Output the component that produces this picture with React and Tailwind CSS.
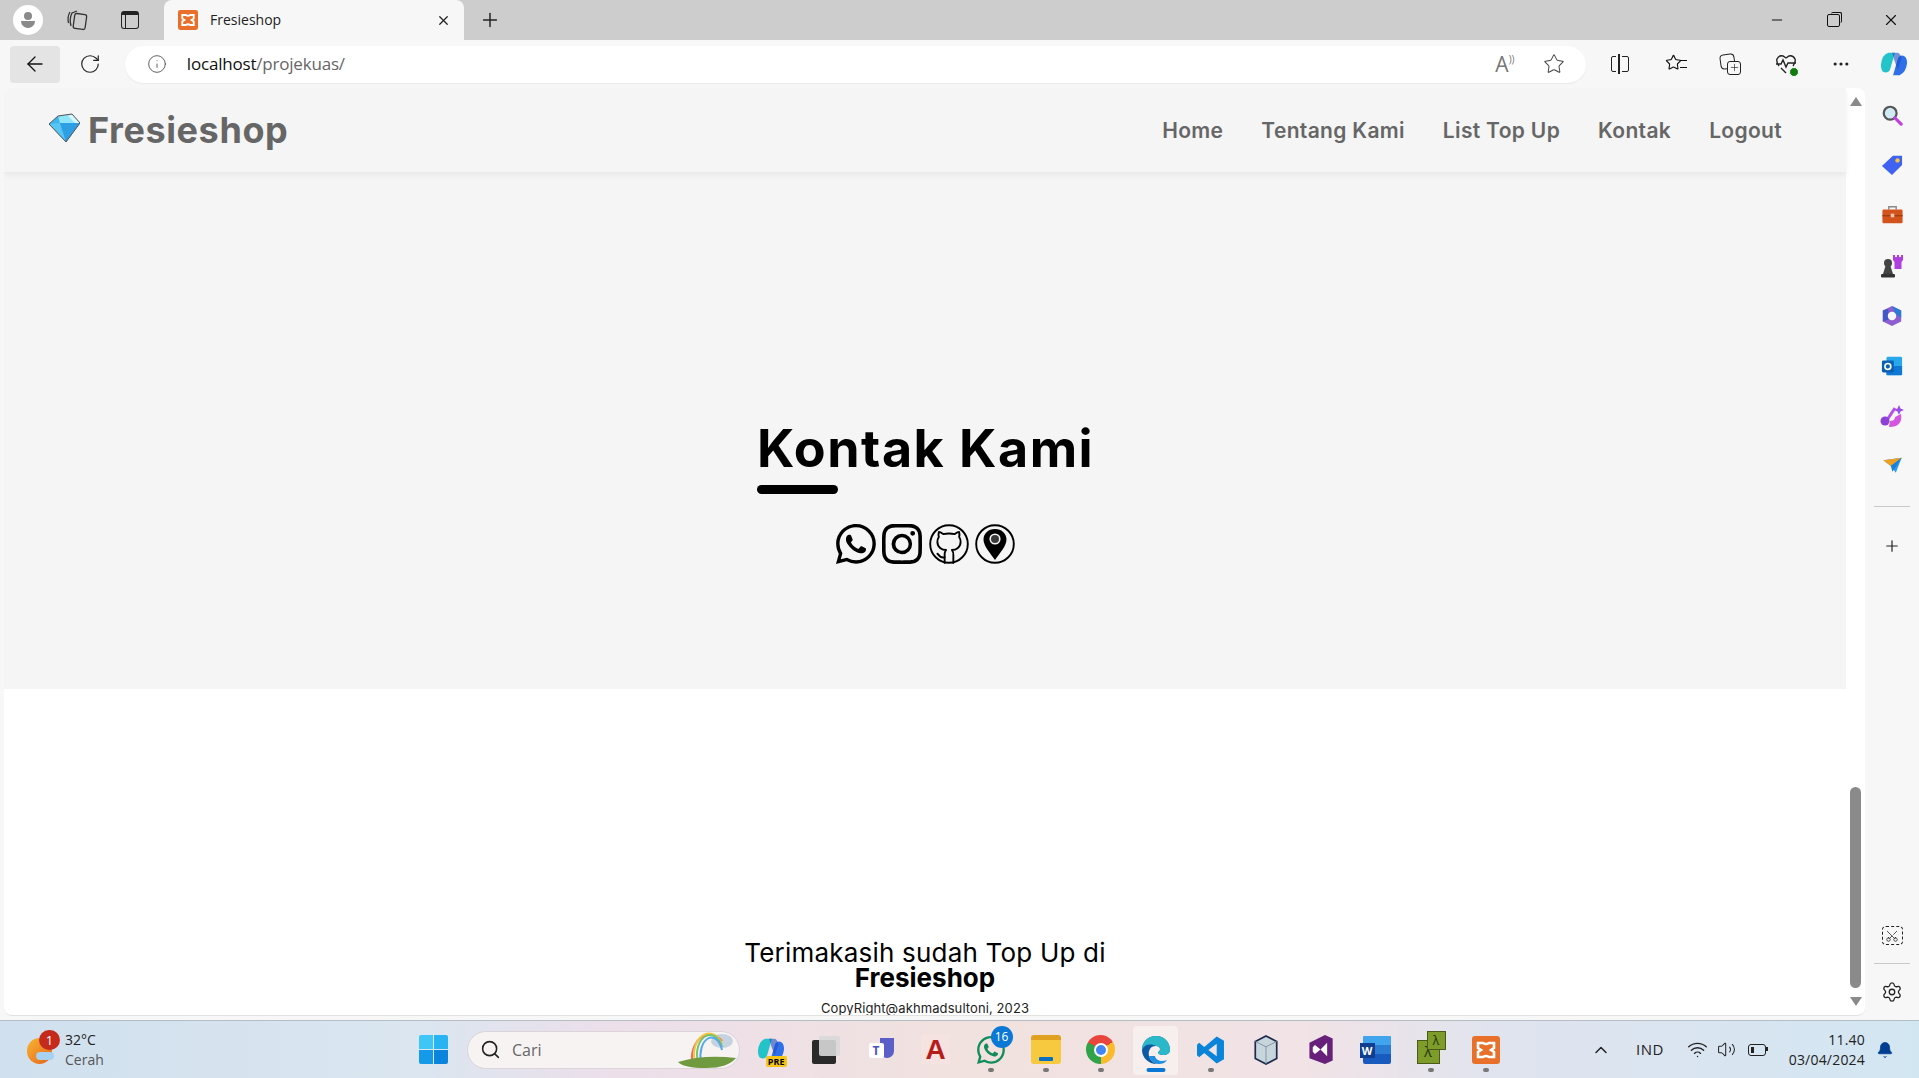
import React from 'react'
import {
  ArrowLeft, RotateCw, Info, Star, X, Plus, Minus, Ellipsis, Search, Settings, Wifi, Volume2, ChevronUp, Bell, Scissors,
} from 'lucide-react'
import { BsWhatsapp, BsInstagram } from 'react-icons/bs'

const navLinks = ['Home', 'Tentang Kami', 'List Top Up', 'Kontak', 'Logout']

const Gem = ({ className }) => (
  <svg viewBox="0 0 32 30" className={className}>
    <path d="M1 11 L10 3 L24 1 L32 10 L18 29 Z" fill="#3fb4f0" />
    <path d="M1 11 L12 10 L18 29 Z" fill="#58c6f5" />
    <path d="M12 10 L32 10 L18 29 Z" fill="#2f9fe3" />
    <path d="M10 3 L24 1 L27 10 L12 10 Z" fill="#8fe6fb" />
    <path d="M20 3 L24 1 L32 10 L27 10 Z" fill="#d7f6fd" />
    <path d="M1 11 L10 3 L24 1 L32 10 L18 29 Z" fill="none" stroke="#555" strokeWidth="1" />
  </svg>
)

const Xampp = ({ className }) => (
  <svg viewBox="0 0 28 28" className={className}>
    <rect width="28" height="28" rx="3" fill="#e8702a" />
    <path d="M6 7 H11 Q14 9 17 7 H22 V12 L19 14 L22 16 V21 H17 Q14 19 11 21 H6 V16 L9 14 L6 12 Z" fill="none" stroke="#fff" strokeWidth="2.6" />
  </svg>
)

const Copilot = ({ className }) => (
  <svg viewBox="0 0 30 30" className={className}>
    <path d="M9 3 H16 L11 20 Q10 24 6 24 Q1 24 1 16 Q2 5 9 3 Z" fill="#22c3c9" />
    <path d="M14 27 H21 Q28 24 29 14 Q29 7 24 6 Q20 6 19 10 L14 27 Z" fill="#2f6fe8" />
    <path d="M13 3 H18 Q22 3 23 9 L19 21 L15 10 Q14 6 13 3 Z" fill="#1b4fc4" opacity=".6" />
  </svg>
)

// sidebar apps, drawn small
const SideIcons = {
  search: (
    <svg viewBox="0 0 24 24" className="w-[22px] h-[22px]">
      <circle cx="10" cy="10" r="7" fill="#cfeaf5" stroke="#555" strokeWidth="2.4" />
      <path d="M15 15 L22 22" stroke="#c03ee0" strokeWidth="3.4" strokeLinecap="round" />
    </svg>
  ),
  tag: (
    <svg viewBox="0 0 24 24" className="w-[22px] h-[22px]">
      <path d="M1 13 L13 2 H23 V12 L12 23 Z" fill="#3f63f0" />
      <circle cx="18" cy="7" r="2.4" fill="#f5c542" />
    </svg>
  ),
  box: (
    <svg viewBox="0 0 24 24" className="w-[23px] h-[22px]">
      <path d="M8 6 V3 H16 V6" fill="none" stroke="#888" strokeWidth="1.6" />
      <rect x="1" y="6" width="22" height="15" rx="1.5" fill="#d2531c" />
      <rect x="1" y="12" width="22" height="1.5" fill="#a63c10" />
      <rect x="10" y="10.5" width="4" height="4" fill="#f3c3a5" />
    </svg>
  ),
  chess: (
    <svg viewBox="0 0 24 24" className="w-[24px] h-[24px]">
      <path d="M13 1 H15 V3 H17 V1 H19 V3 H21 V1 H23 V6 L21.5 8 V15 H14.5 V8 L13 6 Z" fill="#b13fe0" />
      <circle cx="8" cy="9" r="4" fill="#444" />
      <path d="M5.500 12 H10.500 L13 20 H3 Z" fill="#444" />
      <rect x="1" y="20" width="14" height="3.500" rx="1" fill="#333" />
    </svg>
  ),
  m365: (
    <svg viewBox="0 0 24 24" className="w-[22px] h-[22px]">
      <path d="M12 1 L22 6 V18 L12 23 L2 18 V6 Z" fill="#8f5fd0" />
      <path d="M12 1 L22 6 V14 L16 10 Z" fill="#2b7cd3" />
      <path d="M2 6 L8 4 V16 L2 18 Z" fill="#4258c8" />
      <circle cx="12" cy="12" r="4.600" fill="#f7f7f7" />
    </svg>
  ),
  outlook: (
    <svg viewBox="0 0 24 24" className="w-[22px] h-[22px]">
      <rect x="6" y="2" width="17" height="20" rx="1.5" fill="#28a8ea" />
      <path d="M6 12 L23 12 V22 H6 Z" fill="#0f78d4" />
      <rect x="1" y="6" width="13" height="13" rx="1.5" fill="#0a5fb0" />
      <circle cx="7.500" cy="12.500" r="3.200" fill="none" stroke="#fff" strokeWidth="1.8" />
    </svg>
  ),
  brush: (
    <svg viewBox="0 0 24 24" className="w-[24px] h-[24px]">
      <path d="M15 4 L7 16" stroke="#b84fe8" strokeWidth="3" />
      <path d="M9 23 Q23 23 21 10 L15 13 Q15 17 10 17 Z" fill="#d455e0" />
      <circle cx="5" cy="17" r="4.500" fill="#8d3fd6" />
      <path d="M19 1 L20.500 4.500 L24 6 L20.500 7.500 L19 11 L17.500 7.500 L14 6 L17.500 4.500 Z" fill="#9a4de8" />
    </svg>
  ),
  send: (
    <svg viewBox="0 0 24 24" className="w-[23px] h-[20px]">
      <path d="M1 5 L23 2 L16 20 L10 12 Z" fill="#2b9af0" />
      <path d="M1 5 L23 2 L10 12 Z" fill="#f0a020" />
      <path d="M10 12 L23 2 L12 19 Z" fill="#1b7fd8" />
    </svg>
  ),
}

const ChromeBtn = ({ children, className = '' }) => (
  <div className={`flex items-center justify-center ${className}`}>{children}</div>
)

const GithubCircle = () => (
  <svg viewBox="0 0 40 40" className="w-10 h-10" fill="none" stroke="#000" strokeLinecap="round" strokeLinejoin="round">
    <circle cx="20" cy="20" r="18.800" strokeWidth="1.900" />
    <g transform="translate(2.600 5) scale(1.450)" strokeWidth="1.300">
      <path d="M15 23.400V18a4.800 4.800 0 0 0-1-3.500c3 0 6-2 6-5.500.08-1.250-.27-2.480-1-3.500.28-1.150.28-2.350 0-3.500 0 0-1 0-3 1.500-2.640-.5-5.360-.5-8 0C6 2 5 2 5 2c-.3 1.150-.3 2.350 0 3.500A5.403 5.403 0 0 0 4 9c0 3.500 3 5.500 6 5.500-.39.49-.68 1.050-.85 1.650-.17.6-.22 1.230-.15 1.850v5.400" />
      <path d="M9 19.500c-2 .6-3.500-.4-5-2.500" />
    </g>
  </svg>
)

const PinCircle = () => (
  <svg viewBox="0 0 40 40" className="w-10 h-10">
    <circle cx="20" cy="20" r="18.800" fill="none" stroke="#000" strokeWidth="1.900" />
    <path d="M20 5 C13 5 8.500 10 8.500 15.500 C8.500 22 15.500 29.500 20 36 C24.500 29.500 31.500 22 31.500 15.500 C31.500 10 27 5 20 5 Z" fill="#000" />
    <circle cx="20" cy="15" r="4.800" fill="#3a3a3a" stroke="#f5f5f5" strokeWidth="1.600" />
  </svg>
)

const TabStrip = () => (
  <div className="h-10 bg-[#cdcdcd] flex items-stretch shrink-0">
    <div className="w-[56px] flex items-center justify-end pr-[13px]">
      <div className="w-[30px] h-[30px] rounded-full bg-white flex flex-col items-center justify-center">
        <div className="w-2 h-2 rounded-full bg-[#8a8a8a]" />
        <div className="w-[14px] h-[7px] rounded-b-full rounded-t-sm bg-[#8a8a8a] mt-px" />
      </div>
    </div>
    <ChromeBtn className="w-[42px]">
      <svg viewBox="0 0 22 22" className="w-[22px] h-[22px]" fill="none" stroke="#333" strokeWidth="1.3">
        <rect x="8" y="5" width="12" height="15" rx="2" transform="rotate(8 14 12)" />
        <path d="M5 17 Q3 10 6 4 L11 2" />
        <path d="M2.500 14 Q1 8 4 3" />
      </svg>
    </ChromeBtn>
    <ChromeBtn className="w-[64px]">
      <div className="w-[18px] h-[18px] rounded-[3px] border-[1.5px] border-[#222] border-t-[4px] flex">
        <div className="w-[4px] border-r border-[#222]" />
      </div>
    </ChromeBtn>
    <div className="w-[300px] ml-[2px] bg-[#f7f7f7] rounded-t-lg flex items-center pl-[14px] pr-[13px]">
      <Xampp className="w-5 h-5" />
      <span className="ml-[12px] -mt-[2px] flex-1 text-[14px] text-[#222] font-['Open_Sans',sans-serif]">Fresieshop</span>
      <X size={15} strokeWidth={2} className="text-[#222]" />
    </div>
    <ChromeBtn className="w-[52px]">
      <Plus size={22} strokeWidth={1.6} className="text-[#222]" />
    </ChromeBtn>
    <div className="flex-1" />
    <ChromeBtn className="w-[57px]"><Minus size={16} strokeWidth={1.6} className="text-[#111]" /></ChromeBtn>
    <ChromeBtn className="w-[57px]">
      <div className="relative w-[13px] h-[13px] rounded-[2px] border border-[#111]">
        <div className="absolute -top-[3px] -right-[3px] w-[11px] h-[11px] rounded-[2px] border-t border-r border-[#111]" />
      </div>
    </ChromeBtn>
    <ChromeBtn className="w-[57px]"><X size={18} strokeWidth={1.5} className="text-[#111]" /></ChromeBtn>
  </div>
)

const Toolbar = () => (
  <div className="h-12 bg-[#f7f7f7] flex items-center shrink-0 pl-[10px]">
    <div className="w-[50px] h-[37px] rounded-[4px] bg-[#e4e4e4] flex items-center justify-center">
      <ArrowLeft size={24} strokeWidth={1.3} className="text-[#111]" />
    </div>
    <ChromeBtn className="w-[60px]"><RotateCw size={22} strokeWidth={1.3} className="text-[#222]" /></ChromeBtn>
    <div className="w-[1463px] h-[37px] ml-[5px] rounded-full bg-white flex items-center pl-[22px] pr-[21px] shadow-[0_1px_2px_rgba(0,0,0,0.06)]">
      <Info size={20} strokeWidth={1} className="text-[#444]" />
      <span className="ml-[20px] flex-1 text-[17px] tracking-[-0.2px] text-[#111] font-['Open_Sans',sans-serif]">
        localhost<span className="text-[#666]">/projekuas/</span>
      </span>
      <span className="text-[21px] leading-none text-[#777] mr-[28px] font-['Open_Sans',sans-serif]">A<span className="text-[10px] align-top">))</span></span>
      <Star size={22} strokeWidth={1.1} className="text-[#444]" />
    </div>
    <ChromeBtn className="w-[56px] ml-[7px]">
      <div className="relative w-[18px] h-[16px] rounded-[2px] border-[1.5px] border-[#222]">
        <div className="absolute -top-[3px] bottom-[-3px] left-[6px] w-[1.5px] bg-[#222] outline-2 outline-[#f7f7f7]" />
      </div>
    </ChromeBtn>
    <ChromeBtn className="w-[55px]">
      <div className="relative w-[22px] h-[20px]">
        <Star size={17} strokeWidth={1.6} className="text-[#111]" />
        <div className="absolute right-0 top-[6px] w-[7px] h-[8px] border-y border-[#111]" />
      </div>
    </ChromeBtn>
    <ChromeBtn className="w-[55px]">
      <div className="relative w-[21px] h-[21px]">
        <div className="absolute left-0 top-0 w-[15px] h-[15px] rounded-[4px] border-[1.3px] border-[#222] rotate-[-8deg]" />
        <div className="absolute right-0 bottom-0 w-[14px] h-[14px] rounded-[3px] border-[1.3px] border-[#222] bg-[#f7f7f7] flex items-center justify-center">
          <Plus size={11} strokeWidth={1.4} className="text-[#222]" />
        </div>
      </div>
    </ChromeBtn>
    <ChromeBtn className="w-[55px]">
      <div className="relative">
        <svg viewBox="0 0 22 22" className="w-[22px] h-[22px]" fill="none" stroke="#222" strokeWidth="1.4">
          <path d="M4 13 Q1 9 2 6 Q4 2 8 3 L11 5 L14 3 Q18 2 20 6 Q21 9 18 13 M1 11 H6 L8 7 L11 14 L13 10 H21 M6 15 L11 20" />
        </svg>
        <div className="absolute -right-[2px] -bottom-[2px] w-[10px] h-[10px] rounded-full bg-[#107c10] border border-white" />
      </div>
    </ChromeBtn>
    <ChromeBtn className="w-[55px]"><Ellipsis size={20} strokeWidth={1.8} className="text-[#222]" /></ChromeBtn>
    <ChromeBtn className="w-[51px]"><Copilot className="w-[30px] h-[28px]" /></ChromeBtn>
  </div>
)

const Page = () => (
  <div className="ml-1 w-[1861px] rounded-t-lg rounded-b-lg bg-white flex overflow-hidden border-b border-[#e2e2e2] font-['Inter',sans-serif]">
    <div className="w-[1842px] flex flex-col">
      <nav className="h-[84px] bg-[#f5f5f5] flex items-center pl-[44px] pr-[64px] shadow-[0_3px_6px_rgba(0,0,0,0.06)] relative z-10 shrink-0">
        <Gem className="w-[32px] h-[30px] mb-1" />
        <span className="ml-[8px] text-[36px] font-bold text-[#666] leading-none tracking-[0.600px]">Fresieshop</span>
        <div className="flex-1" />
        <div className="flex gap-[38px]">
          {navLinks.map((link) => (
            <a key={link} className="text-[21px] font-semibold text-[#666] leading-none tracking-[0.330px]">{link}</a>
          ))}
        </div>
      </nav>

      <section className="h-[517px] bg-[#f5f5f5] flex flex-col items-center pt-[251px] shrink-0">
        <div className="w-[336px]">
          <h2 className="text-[52px] leading-none font-bold text-black whitespace-nowrap tracking-[1.500px]">Kontak Kami</h2>
          <div className="w-[81px] h-[9px] rounded-full bg-black mt-[10px]" />
        </div>
        <div className="flex gap-[6.500px] mt-[30px] ml-[1px]">
          <BsWhatsapp className="w-10 h-10 text-black" />
          <BsInstagram className="w-10 h-10 text-black" />
          <GithubCircle />
          <PinCircle />
        </div>
      </section>

      <footer className="flex-1 flex flex-col items-center justify-end text-black">
        <p className="text-[26px] leading-[25px] tracking-[0.200px]">Terimakasih sudah Top Up di</p>
        <p className="text-[26px] leading-[25px] font-bold">Fresieshop</p>
        <p className="text-[13px] leading-[14px] mt-[11px] text-[#222] tracking-[0.100px]">CopyRight@akhmadsultoni, 2023</p>
      </footer>
    </div>

    <div className="w-[19px] flex flex-col items-center pt-[9px] pb-[9px]">
      <div className="w-0 h-0 border-x-[6px] border-x-transparent border-b-[9px] border-b-[#8a8a8a]" />
      <div className="flex-1" />
      <div className="w-[11px] h-[201px] rounded-full bg-[#8a8a8a]" />
      <div className="w-0 h-0 mt-[9px] border-x-[6px] border-x-transparent border-t-[9px] border-t-[#8a8a8a]" />
    </div>
  </div>
)

const SidePanel = () => (
  <div className="flex-1 flex flex-col items-center pt-[27px] pb-[13px]">
    <div className="flex flex-col gap-[50.200px] items-center">
      {Object.entries(SideIcons).map(([name, icon]) => (
        <div key={name} className="h-0 flex items-center justify-center">{icon}</div>
      ))}
    </div>
    <div className="w-[36px] h-px bg-[#c8c8c8] mt-[40px]" />
    <Plus size={18} strokeWidth={1.6} className="text-[#222] mt-[30px]" />
    <div className="flex-1" />
    <div className="w-[21px] h-[19px] rounded-[4px] border border-dashed border-[#222] flex items-center justify-center">
      <Scissors size={14} strokeWidth={1.3} className="text-[#222] rotate-[-90deg]" />
    </div>
    <div className="w-[36px] h-px bg-[#c8c8c8] mt-[18px]" />
    <Settings size={22} strokeWidth={1.4} className="text-[#222] mt-[17px]" />
  </div>
)

const WinLogo = () => (
  <div className="grid grid-cols-2 gap-[1px] w-[29px] h-[29px]">
    <div className="bg-[#3ec6f7] rounded-tl-[2px]" />
    <div className="bg-[#28b4f2] rounded-tr-[2px]" />
    <div className="bg-[#149ae8] rounded-bl-[2px]" />
    <div className="bg-[#0a84dc] rounded-br-[2px]" />
  </div>
)

const dot = <div className="absolute -bottom-[7px] left-1/2 -translate-x-1/2 w-[6px] h-[4px] rounded-full bg-[#777]" />

const TaskIcon = ({ children, running }) => (
  <div className="relative w-[55px] h-full flex items-center justify-center">
    <div className="relative w-[30px] h-[30px] flex items-center justify-center">
      {children}
      {running && dot}
    </div>
  </div>
)

const Taskbar = () => (
  <div className="h-[58px] shrink-0 border-t border-[#b4bcc4] flex items-stretch font-['Open_Sans',sans-serif] bg-[linear-gradient(90deg,#d0e0ee_0%,#dbe6f0_22%,#ecdfea_32%,#f1e2df_50%,#f1e3e6_68%,#e0e4ef_78%,#d2e6f2_100%)]">
    <div className="w-[410px] flex items-center pl-[27px]">
      <div className="relative w-[28px] h-[28px]">
        <div className="absolute left-0 top-[2px] w-[25px] h-[26px] rounded-full bg-[linear-gradient(135deg,#f7b733,#e8621a)]" />
        <div className="absolute left-[9px] top-[16px] w-[18px] h-[8px] rounded-full bg-[#a8d0f0]" />
        <div className="absolute left-[12px] -top-[6px] w-[21px] h-[20px] rounded-full bg-[#c42b1c] text-white text-[13px] leading-[20px] text-center">1</div>
      </div>
      <div className="ml-[10px] text-[14px] leading-[20px]">
        <div className="text-[#222]">32°C</div>
        <div className="text-[#555]">Cerah</div>
      </div>
    </div>

    <div className="w-[47px] flex items-center justify-center"><WinLogo /></div>
    <div className="ml-[10px] my-auto w-[273px] h-[38px] rounded-full bg-[#f8f3f3] border border-[#dcd4d8] flex items-center pl-[12px] pr-[3px]">
      <Search size={21} strokeWidth={1.8} className="text-[#222]" />
      <span className="ml-[11px] flex-1 text-[16px] text-[#666]">Cari</span>
      <svg viewBox="0 0 60 36" className="w-[60px] h-[36px]">
        <ellipse cx="46" cy="9" rx="11" ry="7" fill="#c5d2df" />
        <path d="M16 30 A18 24 0 0 1 46 9" fill="none" stroke="#e8705a" strokeWidth="2" />
        <path d="M19 30 A15 21 0 0 1 46 12" fill="none" stroke="#f3c542" strokeWidth="2" />
        <path d="M22 30 A12 18 0 0 1 46 15" fill="none" stroke="#6fc66f" strokeWidth="2" />
        <path d="M25 30 A9 15 0 0 1 46 18" fill="none" stroke="#58a8e8" strokeWidth="2" />
        <path d="M2 30 Q28 22 60 26 Q52 36 30 36 Q8 36 2 30 Z" fill="#6f9a3f" />
      </svg>
    </div>

    <div className="ml-[3px] flex items-stretch">
      <TaskIcon>
        <Copilot className="w-[28px] h-[28px]" />
        <span className="absolute -right-[1px] -bottom-[2px] px-[2px] rounded-[2px] bg-[#f5c518] text-[9px] leading-[11px] font-bold text-black">PRE</span>
      </TaskIcon>
      <TaskIcon>
        <div className="absolute left-[1px] bottom-[1px] w-[24px] h-[24px] rounded-[2px] bg-[#2a2a2a]" />
        <div className="absolute right-[1px] top-[1px] w-[21px] h-[20px] rounded-[2px] bg-[#d8d8d8]/90" />
      </TaskIcon>
      <TaskIcon>
        <div className="absolute right-[2px] top-[3px] w-[14px] h-[20px] rounded-b-full bg-[#5b5fc7]" />
        <div className="absolute left-[3px] top-[8px] w-[15px] h-[15px] rounded-[2px] bg-white text-[#4b53bc] text-[12px] leading-[15px] font-bold text-center">T</div>
      </TaskIcon>
      <TaskIcon>
        <div className="w-[29px] h-[29px] bg-[#f4e3e0] flex items-center justify-center text-[28px] leading-none font-bold text-[#b71c1c] font-['Liberation_Sans',sans-serif]">A</div>
      </TaskIcon>
      <TaskIcon running>
        <BsWhatsapp className="w-[28px] h-[28px] text-[#128c5a]" />
        <div className="absolute -right-[7px] -top-[9px] w-[22px] h-[22px] rounded-full bg-[#0a78d4] text-white text-[12px] leading-[22px] text-center">16</div>
      </TaskIcon>
      <TaskIcon running>
        <div className="w-[30px] h-[29px] rounded-[3px] bg-[#f7c93e] border-t-[5px] border-[#e0a020] flex items-end justify-center pb-[3px]">
          <div className="w-[14px] h-[4px] rounded-[1px] bg-[#0a6fc2]" />
        </div>
      </TaskIcon>
      <TaskIcon running>
        <div className="w-[29px] h-[29px] rounded-full bg-[conic-gradient(from_300deg,#e8453c_0_33%,#f9bb2d_33%_66%,#2fa24a_66%_100%)] flex items-center justify-center">
          <div className="w-[14px] h-[14px] rounded-full bg-[#4285f4] border-2 border-white" />
        </div>
      </TaskIcon>
      <div className="relative w-[55px] h-full flex items-center justify-center">
        <div className="absolute inset-x-[5px] top-[5px] bottom-[3px] rounded-[4px] bg-[#f7efee]" />
        <svg viewBox="0 0 30 30" className="relative w-[30px] h-[30px]">
          <path d="M15 1 C23 1 29 7 29 15 C29 18 26 20 22 20 C19 20 17 19 17 17 C20 16 20 11 15 11 C9 11 7 16 8 21 C9 25 13 29 18 29 C8 30 1 23 1 15 C1 7 7 1 15 1 Z" fill="#0c59a4" />
          <path d="M1 15 C1 7 7 1 15 1 C23 1 29 7 29 15 C29 18 26 20 22 20 C19 20 17 19 17 17 C20 16 20 11 15 11 C8 8 3 10 1 15 Z" fill="#2bb8c8" />
          <path d="M8 21 C9 25 13 29 18 29 C21 29 24 28 26 25 C21 27 15 26 14 21 Z" fill="#1f8fe0" />
        </svg>
        <div className="absolute bottom-[6px] left-1/2 -translate-x-1/2 w-[19px] h-[4px] rounded-full bg-[#0a78d4]" />
      </div>
      <TaskIcon running>
        <svg viewBox="0 0 28 28" className="w-[29px] h-[30px]">
          <path d="M20 1 L27 5 V23 L20 27 L8 17 L3 21 L1 19 V9 L3 7 L8 11 Z M20 8 L12 14 L20 20 Z" fill="#0a84d8" fillRule="evenodd" />
        </svg>
      </TaskIcon>
      <TaskIcon>
        <svg viewBox="0 0 24 28" className="w-[26px] h-[30px]">
          <path d="M12 1 L22 6 V22 L12 27 L2 22 V6 Z" fill="#c7d6dd" stroke="#1f2a4d" strokeWidth="1.6" />
          <path d="M12 11 L22 6 M12 11 L2 6 M12 11 V27" stroke="#7a8ea0" strokeWidth=".8" />
        </svg>
      </TaskIcon>
      <TaskIcon>
        <svg viewBox="0 0 24 28" className="w-[27px] h-[31px]">
          <path d="M2 8 L16 1 L23 4 V24 L16 27 L2 22 Z" fill="#68217a" />
          <path d="M7 10 L12 14 L18 8 V20 L12 14 L7 18 L5 16 V12 Z" fill="#fff" />
        </svg>
      </TaskIcon>
      <TaskIcon>
        <div className="relative w-[29px] h-[28px] bg-[#185abd] rounded-[2px] ml-[2px]">
          <div className="absolute left-0 top-0 right-0 h-1/3 bg-[#41a5ee] rounded-t-[2px]" />
          <div className="absolute left-0 top-1/3 right-0 h-1/3 bg-[#2b7cd3]" />
          <div className="absolute -left-[3px] top-[7px] w-[15px] h-[15px] bg-[#103f91] text-white text-[11px] leading-[15px] font-bold text-center">W</div>
        </div>
      </TaskIcon>
      <TaskIcon running>
        <div className="absolute left-[1px] bottom-[1px] w-[23px] h-[24px] bg-[#7d9c2a] border border-[#4a5a1a] text-[#22300a] text-[14px] leading-[22px] text-center">λ</div>
        <div className="absolute right-0 -top-[4px] w-[19px] h-[19px] bg-[#7d9c2a] border border-[#4a5a1a] text-[#22300a] text-[12px] leading-[17px] text-center">λ</div>
      </TaskIcon>
      <TaskIcon running><Xampp className="w-[28px] h-[30px]" /></TaskIcon>
    </div>

    <div className="flex-1 flex items-center justify-end text-[#222]">
      <ChevronUp size={20} strokeWidth={1.8} className="mr-[25px]" />
      <span className="text-[15px] tracking-[0.4px] mr-[23px]">IND</span>
      <Wifi size={21} strokeWidth={1.6} className="mr-[9px]" />
      <Volume2 size={19} strokeWidth={1.3} className="mr-[12px]" />
      <div className="relative w-[18px] h-[12px] rounded-[3px] border-[1.3px] border-[#222] mr-[23px]">
        <div className="absolute left-[2px] top-[2px] bottom-[2px] w-[3px] bg-[#222]" />
        <div className="absolute -right-[3px] top-[2.500px] w-[2px] h-[4px] bg-[#222]" />
      </div>
      <div className="text-[14px] leading-[20px] text-right mr-[11px] tracking-[0.200px]">
        <div>11.40</div>
        <div>03/04/2024</div>
      </div>
      <Bell size={18} fill="#003e92" strokeWidth={1} className="text-[#003e92] mr-[25px]" />
    </div>
  </div>
)

const App = () => (
  <div className="w-[1919px] h-[1078px] overflow-hidden flex flex-col bg-[#f7f7f7]">
    <TabStrip />
    <Toolbar />
    <div className="h-[932px] shrink-0 flex items-stretch pb-[4px]">
      <Page />
      <SidePanel />
    </div>
    <Taskbar />
  </div>
)

export default App
